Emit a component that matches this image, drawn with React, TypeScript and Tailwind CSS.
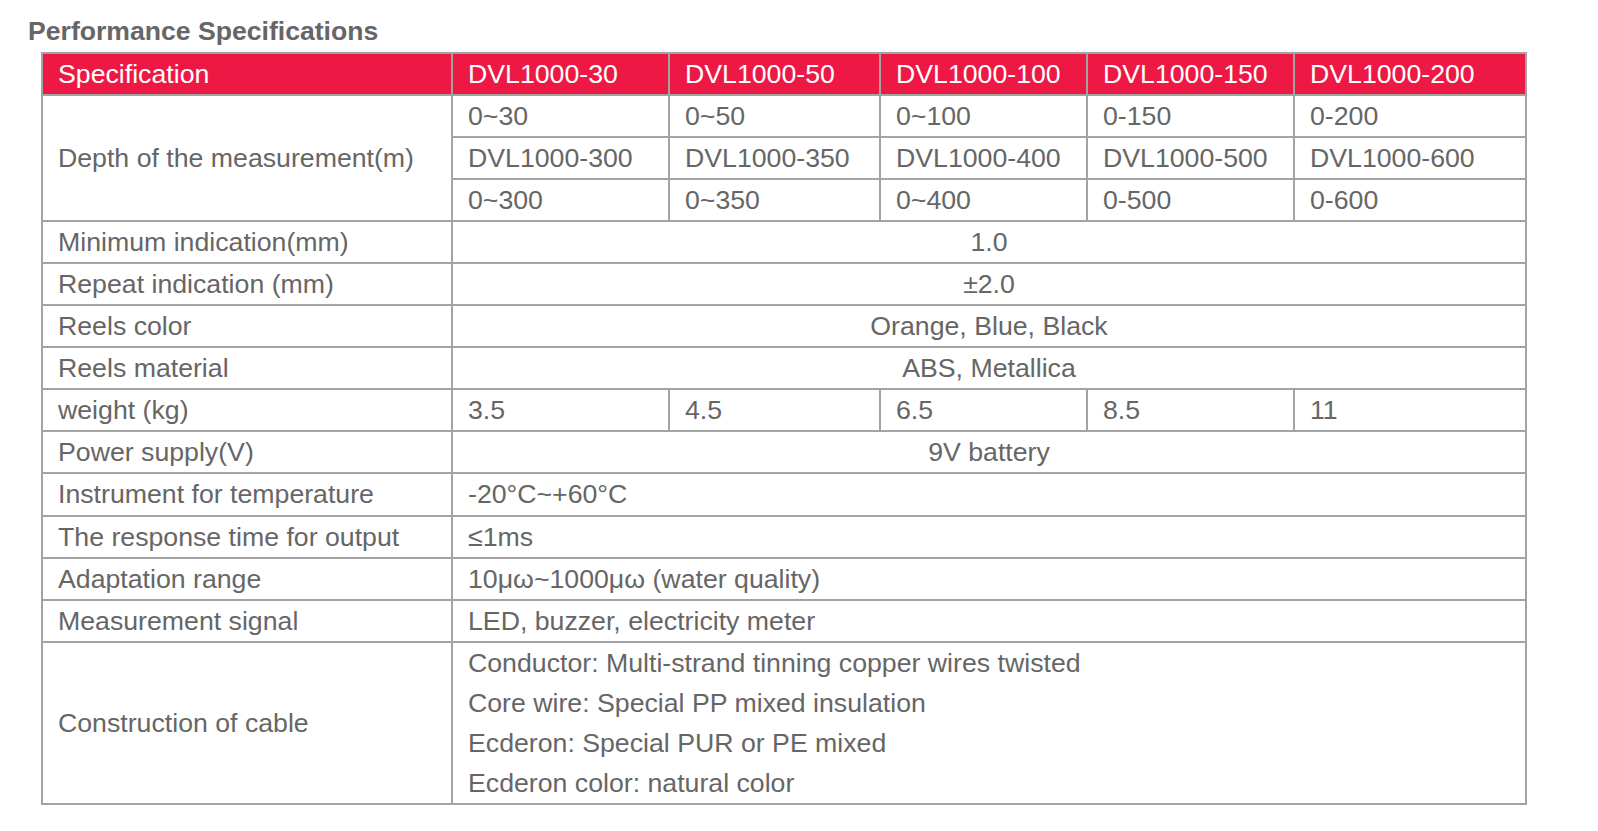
import React from "react";

const font = { fontFamily: '"Liberation Sans", Arial, sans-serif' };

const heads = ["DVL1000-30", "DVL1000-50", "DVL1000-100", "DVL1000-150", "DVL1000-200"];
const ranges1 = ["0~30", "0~50", "0~100", "0-150", "0-200"];
const models2 = ["DVL1000-300", "DVL1000-350", "DVL1000-400", "DVL1000-500", "DVL1000-600"];
const ranges2 = ["0~300", "0~350", "0~400", "0-500", "0-600"];
const weights = ["3.5", "4.5", "6.5", "8.5", "11"];

// base cell look, left aligned text
const base = "border-2 border-[#a3a3a3] py-0 align-middle whitespace-nowrap";
const cell = base + " pl-[15px] pr-2 text-left";
const center = base + " px-0 text-center";

export default function App() {
  return (
    <div className="min-h-screen bg-white pl-[28px] pt-[17px]" style={font}>
      <h2 className="text-[26.6px] font-bold leading-[29px] text-[#666666]">Performance Specifications</h2>
      <table className="ml-[13px] mt-[6px] border-collapse text-[26.7px] text-[#666666] w-[1484px] table-fixed">
        <colgroup>
          <col className="w-[410px]" />
          <col className="w-[217px]" />
          <col className="w-[211px]" />
          <col className="w-[207px]" />
          <col className="w-[207px]" />
          <col className="w-[232px]" />
        </colgroup>
        <thead>
          <tr className="h-[42px] bg-[#ee1845] text-white">
            <th className={cell + " font-normal"}>Specification</th>
            {heads.map((h) => (
              <th key={h} className={cell + " font-normal"}>
                {h}
              </th>
            ))}
          </tr>
        </thead>
        <tbody>
          <tr className="h-[42px]">
            <td rowSpan={3} className={cell}>
              Depth of the measurement(m)
            </td>
            {ranges1.map((r) => (
              <td key={r} className={cell}>
                {r}
              </td>
            ))}
          </tr>
          <tr className="h-[42px]">
            {models2.map((r) => (
              <td key={r} className={cell}>
                {r}
              </td>
            ))}
          </tr>
          <tr className="h-[42px]">
            {ranges2.map((r) => (
              <td key={r} className={cell}>
                {r}
              </td>
            ))}
          </tr>
          <tr className="h-[42px]">
            <td className={cell}>Minimum indication(mm)</td>
            <td colSpan={5} className={center}>1.0</td>
          </tr>
          <tr className="h-[42px]">
            <td className={cell}>Repeat indication (mm)</td>
            <td colSpan={5} className={center}>±2.0</td>
          </tr>
          <tr className="h-[42px]">
            <td className={cell}>Reels color</td>
            <td colSpan={5} className={center}>Orange, Blue, Black</td>
          </tr>
          <tr className="h-[42px]">
            <td className={cell}>Reels material</td>
            <td colSpan={5} className={center}>ABS, Metallica</td>
          </tr>
          <tr className="h-[42px]">
            <td className={cell}>weight (kg)</td>
            {weights.map((w) => (
              <td key={w} className={cell}>
                {w}
              </td>
            ))}
          </tr>
          <tr className="h-[42px]">
            <td className={cell}>Power supply(V)</td>
            <td colSpan={5} className={center}>9V battery</td>
          </tr>
          <tr className="h-[42px]">
            <td className={cell}>Instrument for temperature</td>
            <td colSpan={5} className={cell}>-20°C~+60°C</td>
          </tr>
          <tr className="h-[42px]">
            <td className={cell}>The response time for output</td>
            <td colSpan={5} className={cell}>≤1ms</td>
          </tr>
          <tr className="h-[42px]">
            <td className={cell}>Adaptation range</td>
            <td colSpan={5} className={cell}>10μω~1000μω (water quality)</td>
          </tr>
          <tr className="h-[42px]">
            <td className={cell}>Measurement signal</td>
            <td colSpan={5} className={cell}>LED, buzzer, electricity meter</td>
          </tr>
          <tr>
            <td className={cell}>Construction of cable</td>
            <td colSpan={5} className={cell + " leading-[40px]"}>
              <p>Conductor: Multi-strand tinning copper wires twisted</p>
              <p>Core wire: Special PP mixed insulation</p>
              <p>Ecderon: Special PUR or PE mixed</p>
              <p>Ecderon color: natural color</p>
            </td>
          </tr>
        </tbody>
      </table>
    </div>
  );
}
